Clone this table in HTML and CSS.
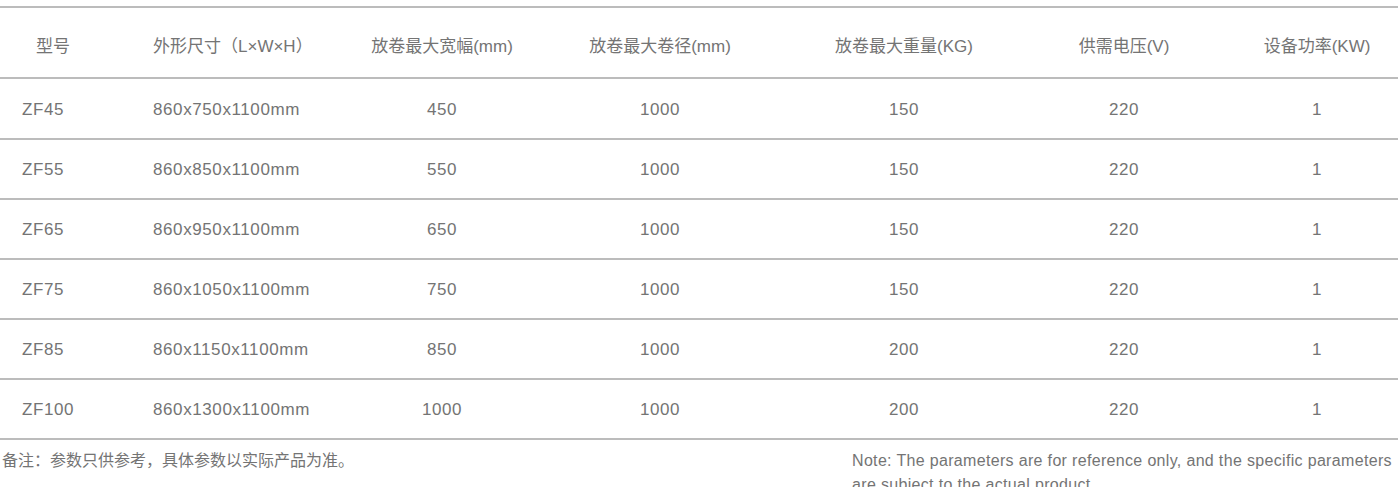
FILE: index.html
```html
<!DOCTYPE html>
<html lang="zh-CN">
<head>
<meta charset="utf-8">
<title>参数表</title>
<link rel="stylesheet" href="styles.css">
</head>
<body>
<div class="wrap">
  <table class="spec">
    <colgroup>
      <col class="c1"><col class="c2"><col class="c3"><col class="c4"><col class="c5"><col class="c6"><col class="c7">
    </colgroup>
    <thead>
      <tr>
        <th class="first">型号</th>
        <th class="left">外形尺寸（L×W×H）</th>
        <th>放卷最大宽幅(mm)</th>
        <th>放卷最大卷径(mm)</th>
        <th>放卷最大重量(KG)</th>
        <th>供需电压(V)</th>
        <th>设备功率(KW)</th>
      </tr>
    </thead>
    <tbody>
      <tr><td class="first">ZF45</td><td class="left">860x750x1100mm</td><td>450</td><td>1000</td><td>150</td><td>220</td><td>1</td></tr>
      <tr><td class="first">ZF55</td><td class="left">860x850x1100mm</td><td>550</td><td>1000</td><td>150</td><td>220</td><td>1</td></tr>
      <tr><td class="first">ZF65</td><td class="left">860x950x1100mm</td><td>650</td><td>1000</td><td>150</td><td>220</td><td>1</td></tr>
      <tr><td class="first">ZF75</td><td class="left">860x1050x1100mm</td><td>750</td><td>1000</td><td>150</td><td>220</td><td>1</td></tr>
      <tr><td class="first">ZF85</td><td class="left">860x1150x1100mm</td><td>850</td><td>1000</td><td>200</td><td>220</td><td>1</td></tr>
      <tr><td class="first">ZF100</td><td class="left">860x1300x1100mm</td><td>1000</td><td>1000</td><td>200</td><td>220</td><td>1</td></tr>
    </tbody>
  </table>
  <div class="notes">
    <p class="note-cn">备注：参数只供参考，具体参数以实际产品为准。</p>
    <p class="note-en">Note: The parameters are for reference only, and the specific parameters are subject to the actual product.</p>
  </div>
</div>
</body>
</html>
```
FILE: styles.css
```css
html, body {
  margin: 0;
  padding: 0;
  background: #ffffff;
}
body {
  font-family: "Liberation Sans", "Noto Sans CJK SC", sans-serif;
  color: #747474;
  overflow: hidden;
}
.wrap {
  padding-top: 6px;
  width: 1398px;
}
.spec {
  width: 1398px;
  table-layout: fixed;
  border-collapse: collapse;
  font-size: 17px;
}
.c1 { width: 131px; }
.c2 { width: 229px; }
.c3 { width: 164px; }
.c4 { width: 272px; }
.c5 { width: 216px; }
.c6 { width: 224px; }
.c7 { width: 162px; }
.spec th,
.spec td {
  font-weight: normal;
  text-align: center;
  padding: 0;
  border-top: 2px solid #bcbcbc;
  white-space: nowrap;
}
.spec thead th {
  height: 65px;
  padding-top: 4px;
}
.spec tbody td {
  height: 56px;
  padding-top: 2px;
  letter-spacing: 0.6px;
}
.spec tbody tr:first-child td {
  height: 57px;
  padding-top: 2px;
}
.spec tbody tr:last-child td {
  border-bottom: 2px solid #bcbcbc;
}
.spec th.first { text-align: left; padding-left: 36px; }
.spec td.first { text-align: left; padding-left: 22px; }
.spec .left { text-align: left; padding-left: 22px; }
.notes {
  display: flex;
  justify-content: space-between;
  align-items: flex-start;
  padding-top: 9px;
}
.notes p {
  margin: 0;
  font-size: 16px;
  line-height: 24px;
}
.note-cn {
  padding-left: 2px;
}
.note-en {
  width: 546px;
  letter-spacing: 0.33px;
}
```
